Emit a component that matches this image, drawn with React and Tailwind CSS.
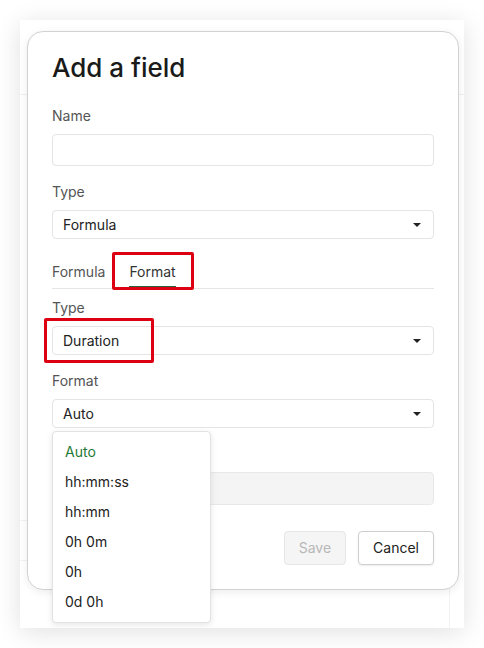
import React from 'react';

const Caret = () => (
  <svg width="8" height="4" viewBox="0 0 8 4" className="shrink-0">
    <path d="M0 0h8L4 4z" fill="#222" />
  </svg>
);

const Label = ({ children, className = '' }) => (
  <div className={`text-sm leading-5 text-[#555] ${className}`}>{children}</div>
);

const Select = ({ value, children }) => (
  <div className="relative mt-2">
    <div className="h-[29px] flex items-center justify-between pl-[10px] pr-[12px] border border-[#e4e4e4] rounded-[4px] text-sm text-[#222] bg-white">
      <span>{value}</span>
      <Caret />
    </div>
    {children}
  </div>
);

const formats = ['Auto', 'hh:mm:ss', 'hh:mm', '0h 0m', '0h', '0d 0h'];

export default function App() {
  return (
    <div className="w-[484px] h-[648px] bg-white p-5 font-['Inter',sans-serif]">
      <div className="relative h-full bg-white shadow-[0_4px_24px_rgba(0,0,0,0.12)] overflow-hidden">
        {/* page underneath the dialog */}
        <div className="flex flex-col h-full">
          <div className="h-[75px] border-b border-[#f0f0f0]" />
          <div className="flex-1 w-[430px] border-r border-[#f2f2f2] flex flex-col">
            <div className="h-[426px] border-b border-[#f2f2f2]" />
            <div className="h-[40px] border-b border-[#f2f2f2]" />
          </div>
        </div>

        {/* dialog */}
        <div className="absolute left-[7px] top-[11px] w-[432px] bg-white border border-[#d2d2d2] rounded-[16px] shadow-[0_2px_8px_rgba(0,0,0,0.08)] px-6 pt-5 pb-6">
          <h2 className="text-[26px] leading-8 font-medium text-[#1a1a1a]">Add a field</h2>

          <Label className="mt-[22px]">Name</Label>
          <div className="mt-2 h-8 border border-[#e4e4e4] rounded-[4px]" />

          <Label className="mt-4">Type</Label>
          <Select value="Formula" />

          <div className="mt-[23px] flex gap-6 border-b border-[#e6e6e6] text-sm leading-5">
            <div className="pb-1 border-b-2 border-transparent text-[#555]">Formula</div>
            <div className="relative pb-1 border-b-2 border-[#2d5e3a] text-[#333]">
              Format
              <div className="absolute -left-[17px] -right-[18px] -top-[10px] -bottom-[4px] border-[3px] border-[#dc0012] rounded-[2px]" />
            </div>
          </div>

          <Label className="mt-[9px]">Type</Label>
          <div className="relative pt-2">
            <div className="h-[29px] flex items-center justify-between pl-[10px] pr-[12px] border border-[#e4e4e4] rounded-[4px] text-sm text-[#222] bg-white">
              <span>Duration</span>
              <Caret />
            </div>
            <div className="absolute -left-[8px] top-0 w-[110px] h-[45px] border-[3px] border-[#dc0012] rounded-[2px]" />
          </div>

          <Label className="mt-4">Format</Label>
          <Select value="Auto">
            <div className="absolute left-0 top-[calc(100%+3px)] z-10 w-[159px] bg-white border border-[#e2e2e2] rounded-[4px] shadow-[0_2px_6px_rgba(0,0,0,0.1)] py-[5px]">
              {formats.map((f, i) => (
                <div
                  key={f}
                  className={`px-[12px] py-[5px] text-sm leading-5 ${i === 0 ? 'text-[#1f7a35]' : 'text-[#222]'}`}
                >
                  {f}
                </div>
              ))}
            </div>
          </Select>

          {/* field row sitting under the open menu */}
          <div className="mt-4 h-5" />
          <div className="mt-2 h-[33px] bg-[#f4f4f4] border border-[#e8e8e8] rounded-[4px]" />

          <div className="mt-[26px] flex justify-end gap-3">
            <button className="h-[34px] px-[14px] bg-[#f5f5f5] border border-[#e6e6e6] rounded-[4px] text-sm text-[#b8b8b8]">
              Save
            </button>
            <button className="h-[34px] px-[14px] bg-white border border-[#cfcfcf] rounded-[4px] text-sm text-[#222] shadow-[0_1px_2px_rgba(0,0,0,0.08)]">
              Cancel
            </button>
          </div>
        </div>
      </div>
    </div>
  );
}
